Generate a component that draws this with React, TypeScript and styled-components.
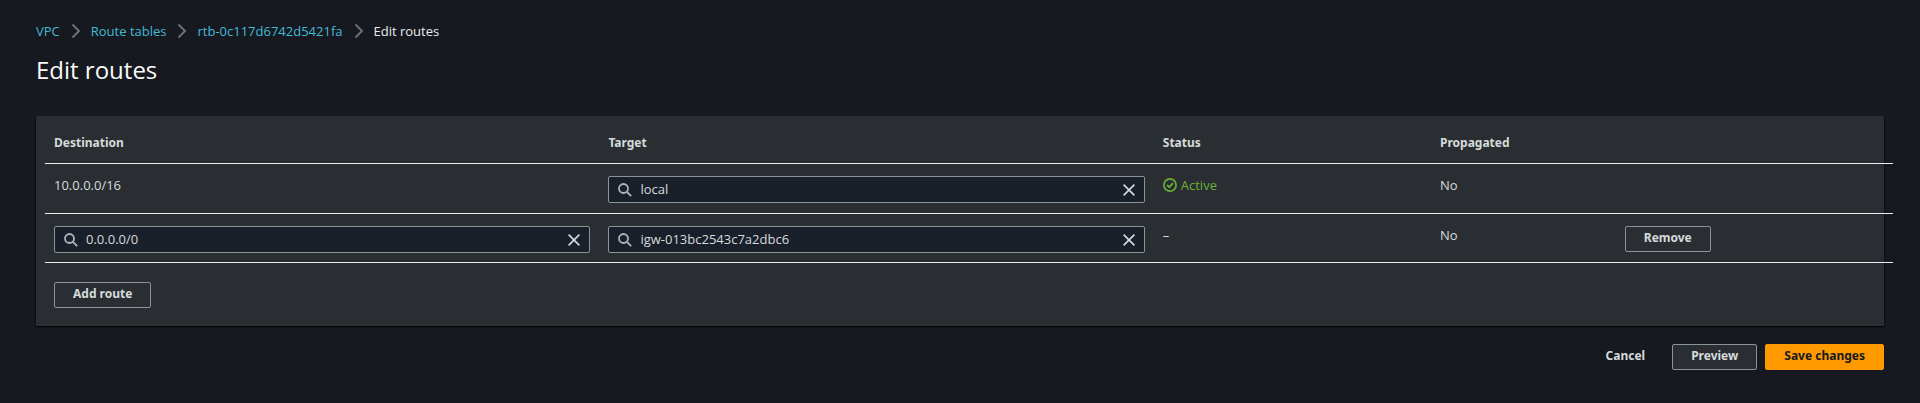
import React, { useState } from "react";
import styled, { createGlobalStyle } from "styled-components";

const GlobalStyle = createGlobalStyle`
  *, *::before, *::after { box-sizing: border-box; }
  html { background: #16191f; }
  body {
    margin: 0;
    background: #16191f;
    color: #d5dbdb;
    font-family: "Open Sans", "Noto Sans", sans-serif;
    font-size: 13px;
    line-height: 20px;
    overflow-x: hidden;
  }
  input, button { font: inherit; }
`;

const Page = styled.main`
  padding: 21px 36px 33px;
`;

const Breadcrumbs = styled.ol`
  display: flex;
  align-items: center;
  margin: 0;
  padding: 0;
  list-style: none;
`;

const Crumb = styled.li`
  display: flex;
  align-items: center;
  color: #eaeded;
`;

const CrumbLink = styled.a`
  color: #44b9d6;
  text-decoration: none;
`;

const Chevron = styled.svg`
  display: block;
  width: 10px;
  height: 16px;
  margin: 0 10px 0 11px;
  fill: none;
  stroke: #687078;
  stroke-width: 2;
`;

const Title = styled.h1`
  margin: 13px 0 30px;
  color: #fafafa;
  font-size: 24px;
  font-weight: 400;
  line-height: 32px;
`;

const Card = styled.section`
  padding: 9px 0 18px;
  background: #2a2e33;
  box-shadow: 0 1px 1px rgba(0, 0, 0, 0.5), 1px 1px 1px rgba(0, 0, 0, 0.3), -1px 1px 1px rgba(0, 0, 0, 0.3);
`;

const RouteTable = styled.table`
  width: 100%;
  margin-left: 9px;
  border-collapse: separate;
  border-spacing: 0;
  table-layout: fixed;
`;

const Column = styled.col<{ $share: number }>`
  width: ${(p) => p.$share}%;
`;

const HeaderCell = styled.th`
  padding: 8px 9px 10px;
  border-bottom: 1px solid #eaeded;
  text-align: left;
  font-family: "Noto Sans", sans-serif;
  font-size: 12px;
  font-weight: 700;
`;

const Row = styled.tr<{ $height: number }>`
  height: ${(p) => p.$height}px;
`;

const Cell = styled.td`
  padding: 12px 9px 9px;
  border-bottom: 1px solid #eaeded;
  line-height: 18px;
  vertical-align: top;
`;

const Field = styled.div`
  display: flex;
  align-items: center;
  height: 27px;
  padding: 0 9px;
  border: 1px solid #879596;
  border-radius: 2px;
  background: #1a2029;
`;

const FieldIcon = styled.svg`
  flex: none;
  width: 14px;
  height: 14px;
  margin-right: 8px;
  fill: none;
  stroke: #aab7b8;
  stroke-width: 1.8;
`;

const FieldInput = styled.input`
  flex: 1;
  min-width: 0;
  height: 22px;
  padding: 0 0 2px;
  border: 0;
  outline: 0;
  background: transparent;
  color: #d5dbdb;
`;

const ClearButton = styled.button`
  display: flex;
  padding: 0;
  border: 0;
  background: transparent;
  color: #d5dbdb;
  cursor: pointer;

  svg {
    width: 12px;
    height: 12px;
    fill: none;
    stroke: currentColor;
    stroke-width: 1.6;
  }
`;

const Status = styled.span`
  display: flex;
  align-items: center;
  gap: 4px;
  color: #6aaf35;

  svg {
    width: 14px;
    height: 14px;
    fill: none;
    stroke: currentColor;
    stroke-width: 1.7;
  }
`;

const Button = styled.button<{ $kind?: "normal" | "primary" | "link" }>`
  height: 26px;
  padding: 0 18px 2px;
  border: 1px solid
    ${(p) => (p.$kind === "primary" ? "#ff9900" : p.$kind === "link" ? "transparent" : "#879596")};
  border-radius: 2px;
  background: ${(p) =>
    p.$kind === "primary" ? "#ff9900" : p.$kind === "link" ? "transparent" : "#2a2e33"};
  color: ${(p) => (p.$kind === "primary" ? "#16191f" : "#d5dbdb")};
  font-family: "Noto Sans", sans-serif;
  font-size: 12px;
  font-weight: 700;
  line-height: 20px;
  cursor: pointer;
`;

const CardActions = styled.div`
  display: flex;
  padding: 19px 18px 0;
`;

const FormActions = styled.footer`
  display: flex;
  justify-content: flex-end;
  gap: 8px;
  margin-top: 18px;
`;

function SearchField({ label, initial }: { label: string; initial: string }) {
  const [value, setValue] = useState(initial);
  return (
    <Field>
      <FieldIcon viewBox="0 0 14 14" aria-hidden="true">
        <circle cx="5.5" cy="5.5" r="4.5" />
        <path d="M8.8 8.8 13.2 13.2" />
      </FieldIcon>
      <FieldInput aria-label={label} value={value} onChange={(e) => setValue(e.target.value)} />
      <ClearButton type="button" aria-label={`Clear ${label}`} onClick={() => setValue("")}>
        <svg viewBox="0 0 12 12" aria-hidden="true">
          <path d="M.6.6 11.4 11.4M11.4.6.6 11.4" />
        </svg>
      </ClearButton>
    </Field>
  );
}

const trail = ["VPC", "Route tables", "rtb-0c117d6742d5421fa"];
const columnShares = [30, 30, 15, 10, 15];

export default function App() {
  return (
    <Page>
      <GlobalStyle />
      <nav aria-label="Breadcrumbs">
        <Breadcrumbs>
          {trail.map((name) => (
            <Crumb key={name}>
              <CrumbLink href="#">{name}</CrumbLink>
              <Chevron viewBox="0 0 10 16" aria-hidden="true">
                <path d="M1.5 1.5 8 8 1.5 14.5" />
              </Chevron>
            </Crumb>
          ))}
          <Crumb aria-current="page">Edit routes</Crumb>
        </Breadcrumbs>
      </nav>
      <Title>Edit routes</Title>
      <Card>
        <RouteTable>
          <colgroup>
            {columnShares.map((share, i) => (
              <Column key={i} $share={share} />
            ))}
          </colgroup>
          <thead>
            <tr>
              <HeaderCell scope="col">Destination</HeaderCell>
              <HeaderCell scope="col">Target</HeaderCell>
              <HeaderCell scope="col">Status</HeaderCell>
              <HeaderCell scope="col">Propagated</HeaderCell>
              <HeaderCell as="td" />
            </tr>
          </thead>
          <tbody>
            <Row $height={50}>
              <Cell>10.0.0.0/16</Cell>
              <Cell>
                <SearchField label="Target of route 1" initial="local" />
              </Cell>
              <Cell>
                <Status>
                  <svg viewBox="0 0 14 14" aria-hidden="true">
                    <circle cx="7" cy="7" r="6.1" />
                    <path d="M4 7 6.2 9.2 10 5.2" />
                  </svg>
                  Active
                </Status>
              </Cell>
              <Cell>No</Cell>
              <Cell />
            </Row>
            <Row $height={49}>
              <Cell>
                <SearchField label="Destination of route 2" initial="0.0.0.0/0" />
              </Cell>
              <Cell>
                <SearchField label="Target of route 2" initial="igw-013bc2543c7a2dbc6" />
              </Cell>
              <Cell>–</Cell>
              <Cell>No</Cell>
              <Cell>
                <Button type="button">Remove</Button>
              </Cell>
            </Row>
          </tbody>
        </RouteTable>
        <CardActions>
          <Button type="button">Add route</Button>
        </CardActions>
      </Card>
      <FormActions>
        <Button type="button" $kind="link">Cancel</Button>
        <Button type="button">Preview</Button>
        <Button type="submit" $kind="primary">Save changes</Button>
      </FormActions>
    </Page>
  );
}
